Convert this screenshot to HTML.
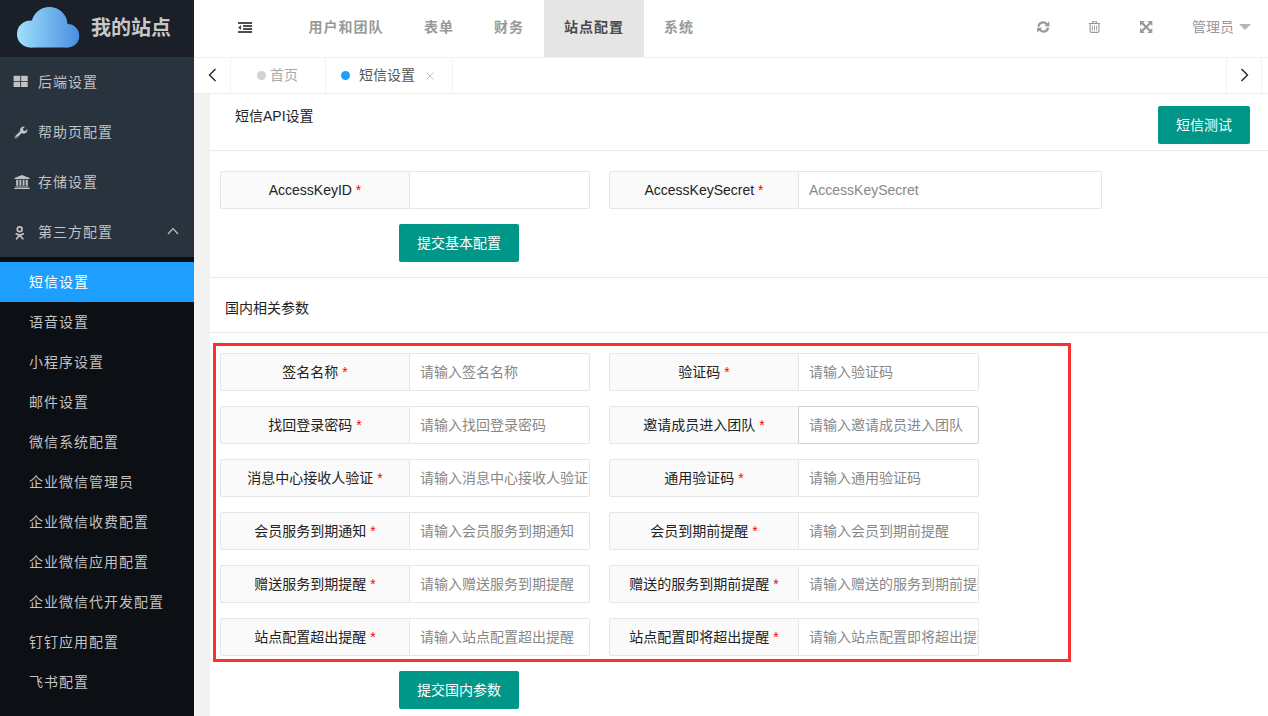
<!DOCTYPE html>
<html lang="zh-CN">
<head>
<meta charset="utf-8">
<title>短信设置</title>
<style>
*{box-sizing:border-box;margin:0;padding:0}
html,body{width:1268px;height:716px;overflow:hidden}
body{font-family:"Liberation Sans","Noto Sans CJK SC",sans-serif;font-size:14px;color:#333;background:#f2f2f2;position:relative}
.abs{position:absolute}
/* sidebar */
#side{position:absolute;left:0;top:0;width:194px;height:716px;background:#28333e}
#logo{position:absolute;left:0;top:0;width:194px;height:57px;background:#1a1f28}
#logo svg{position:absolute;left:16.9px;top:6.6px}
#logo .t{position:absolute;left:91px;top:13px;font-size:20px;font-weight:bold;color:#c8c8c8;line-height:30px;white-space:nowrap}
.mi{position:absolute;left:0;width:194px;height:50px;line-height:50px;color:#c2c2c2;font-size:14px;letter-spacing:1px;padding-left:38px;white-space:nowrap}
.mi svg{position:absolute;left:14px;top:18px}
#sub{position:absolute;left:0;top:257px;width:194px;height:459px;background:#0c0f13}
.si{position:absolute;left:0;width:194px;height:40px;line-height:40px;color:#c2c2c2;font-size:14px;letter-spacing:1px;padding-left:29px;white-space:nowrap}
.si.on{background:#1e9fff;color:#fff}
/* header */
#head{position:absolute;left:194px;top:0;width:1074px;height:57px;background:#fff}
.nv{position:absolute;top:0;height:57px;line-height:54px;font-size:14px;font-weight:bold;letter-spacing:1px;color:#999;white-space:nowrap;text-align:center}
.nv.on{background:#e5e5e5;color:#4a4a4a}
/* tabs */
#tabs{position:absolute;left:194px;top:57px;width:1074px;height:37px;background:#fff;border-top:1px solid #f0f0f0;border-bottom:1px solid #eee}
.vl{position:absolute;top:0;width:1px;height:35px;background:#f3f3f3}
.tb{position:absolute;top:0;height:35px;line-height:35px;font-size:14px;white-space:nowrap}
.dot{position:absolute;border-radius:50%}
/* card */
#card{position:absolute;left:210px;top:94px;width:1058px;height:622px;background:#fff}
.hr{position:absolute;left:210px;width:1058px;height:1px;background:#e8e8e8}
.lbl{position:absolute;height:38px;line-height:36px;text-align:center;background:#fafafa;border:1px solid #e6e6e6;border-radius:2px 0 0 2px;font-size:14px;color:#222;white-space:nowrap;overflow:hidden}
.lbl i{font-style:normal;color:#f00}
.inp{position:absolute;height:38px;line-height:36px;background:#fff;border:1px solid #e6e6e6;border-left:0;border-radius:0 2px 2px 0;font-size:14px;color:#888;padding-left:10px;white-space:nowrap;overflow:hidden}
.btn{position:absolute;height:38px;line-height:38px;background:#009688;color:#fff;font-size:14px;text-align:center;border-radius:2px;white-space:nowrap}
#red{position:absolute;left:213px;top:343px;width:858px;height:319px;border:3px solid #fb3030}
</style>
</head>
<body>

<div id="side">
  <div id="logo">
    <svg width="63" height="41" viewBox="0 0 63 41">
      <defs><linearGradient id="cg" gradientUnits="userSpaceOnUse" x1="0" y1="0" x2="62.3" y2="0"><stop offset="0" stop-color="#a0e0fb"/><stop offset="0.5" stop-color="#73b7ef"/><stop offset="1" stop-color="#4a8de0"/></linearGradient></defs>
      <g fill="url(#cg)"><circle cx="13.4" cy="27.05" r="13.45"/><circle cx="32.45" cy="18.05" r="18.1"/><circle cx="50.6" cy="28.8" r="11.7"/><rect x="13.4" y="25" width="37.2" height="15.5"/></g>
    </svg>
    <div class="t">我的站点</div>
  </div>

  <div class="mi" style="top:57px">
    <svg style="left:13px;top:18px" width="16" height="14" viewBox="0 0 16 14"><rect x="0.6" y="0.8" width="6.6" height="5.2" fill="#c2c2c2"/><rect x="8.1" y="0.8" width="6.6" height="5.2" fill="#c2c2c2"/><rect x="0.6" y="6.8" width="6.6" height="5.2" fill="#c2c2c2"/><rect x="8.1" y="6.8" width="6.6" height="5.2" fill="#c2c2c2"/></svg>
    后端设置</div>
  <div class="mi" style="top:107px">
    <svg style="left:14px;top:19px" width="14" height="13" viewBox="0 0 14 13"><path d="M1.9 11.1 L8.2 4.8" stroke="#c2c2c2" stroke-width="2.5" stroke-linecap="round" fill="none"/><path d="M13.3 2.9 L11.2 5 L9.3 4.6 L8.9 2.7 L11 0.6 C9.4 0.1 7.6 0.6 6.7 2 C5.7 3.4 5.9 5.4 7.1 6.6 C8.3 7.8 10.2 8 11.7 7.1 C13.1 6.2 13.7 4.5 13.3 2.9 Z" fill="#c2c2c2"/><circle cx="2" cy="11" r="0.7" fill="#28333e"/></svg>
    帮助页配置</div>
  <div class="mi" style="top:157px">
    <svg style="left:14px;top:18px" width="16" height="14" viewBox="0 0 16 14"><path d="M8 0 L15.6 3 V4 H0.4 V3 Z M2.2 4.8 H4.3 V10.8 H2.2 Z M5.5 4.8 H7.3 V10.8 H5.5 Z M8.7 4.8 H10.5 V10.8 H8.7 Z M11.7 4.8 H13.8 V10.8 H11.7 Z M1.2 11.4 H14.8 V12.6 H1.2 Z M0.2 12.9 H15.8 V14 H0.2 Z" fill="#c2c2c2"/></svg>
    存储设置</div>
  <div class="mi" style="top:207px">
    <svg style="left:15px;top:19px" width="10" height="14" viewBox="0 0 10 14"><circle cx="4.7" cy="3.3" r="2.4" fill="none" stroke="#c2c2c2" stroke-width="1.7"/><path d="M1.2 7.8 C3.4 9.3 6 9.3 8.2 7.8 M4.7 9 L1.6 12.8 M4.7 9 L7.8 12.8" fill="none" stroke="#c2c2c2" stroke-width="1.7" stroke-linecap="round"/></svg>
    第三方配置
    <svg style="left:167px;top:20px" width="12" height="8" viewBox="0 0 12 8"><path d="M1 7 L6 1.6 L11 7" fill="none" stroke="#c2c2c2" stroke-width="1.2"/></svg>
  </div>

  <div id="sub">
    <div class="si on" style="top:5px">短信设置</div>
    <div class="si" style="top:45px">语音设置</div>
    <div class="si" style="top:85px">小程序设置</div>
    <div class="si" style="top:125px">邮件设置</div>
    <div class="si" style="top:165px">微信系统配置</div>
    <div class="si" style="top:205px">企业微信管理员</div>
    <div class="si" style="top:245px">企业微信收费配置</div>
    <div class="si" style="top:285px">企业微信应用配置</div>
    <div class="si" style="top:325px">企业微信代开发配置</div>
    <div class="si" style="top:365px">钉钉应用配置</div>
    <div class="si" style="top:405px">飞书配置</div>
  </div>
</div>

<div id="head">
  <svg class="abs" style="left:44px;top:22px" width="15" height="11" viewBox="0 0 15 11"><path d="M0 0 H14.1 V1.9 H0 Z M5.1 3.05 H14.1 V4.9 H5.1 Z M5.1 6.1 H14.1 V7.95 H5.1 Z M0 9.1 H14.1 V11 H0 Z M3.1 3 V8 L0 5.5 Z" fill="#4d4d4d"/></svg>
  <div class="nv" style="left:95px;width:114px">用户和团队</div>
  <div class="nv" style="left:215px;width:60px">表单</div>
  <div class="nv" style="left:285px;width:60px">财务</div>
  <div class="nv on" style="left:350px;width:100px">站点配置</div>
  <div class="nv" style="left:455px;width:60px">系统</div>
  <svg class="abs" style="left:843px;top:21px" width="13" height="12" viewBox="0 0 13 12"><path d="M1.5 5.7 A4.6 4.6 0 0 1 9.8 3.3" fill="none" stroke="#999" stroke-width="2.2"/><path d="M12.4 0.2 V5.2 H7.4 Z" fill="#999"/><path d="M11.1 6.3 A4.6 4.6 0 0 1 2.8 8.7" fill="none" stroke="#999" stroke-width="2.2"/><path d="M0.2 11.8 V6.8 H5.2 Z" fill="#999"/></svg>
  <svg class="abs" style="left:894px;top:21px" width="13" height="12" viewBox="0 0 13 12"><path d="M0.8 2.5 H12.1 M4.4 2.3 V0.7 H8.6 V2.3 M2.1 2.8 V10.3 Q2.1 11.4 3.2 11.4 H9.8 Q10.9 11.4 10.9 10.3 V2.8" fill="none" stroke="#999" stroke-width="1.1"/><path d="M4.4 4.5 V9.5 M6.5 4.5 V9.5 M8.6 4.5 V9.5" fill="none" stroke="#999" stroke-width="0.9"/></svg>
  <svg class="abs" style="left:946px;top:21px" width="13" height="12" viewBox="0 0 13 12"><path d="M0 0 H5 L0 5 Z M12.3 0 V5 L7.3 0 Z M0 12 V7 L5 12 Z M12.3 12 H7.3 L12.3 7 Z" fill="#999"/><path d="M2 2 L10.3 10 M10.3 2 L2 10" stroke="#999" stroke-width="2.2" fill="none"/></svg>
  <div class="abs" style="left:998px;top:0;height:57px;line-height:54px;font-size:14px;color:#999;white-space:nowrap">管理员</div>
  <div class="abs" style="left:1045px;top:24px;width:0;height:0;border-left:6px solid transparent;border-right:6px solid transparent;border-top:6px solid #b5b5b5"></div>
</div>

<div id="tabs">
  <svg class="abs" style="left:14px;top:10px" width="9" height="14" viewBox="0 0 9 14"><path d="M7.5 1 L1.5 7 L7.5 13" fill="none" stroke="#222" stroke-width="1.4"/></svg>
  <div class="vl" style="left:36px"></div>
  <div class="dot" style="left:63px;top:13px;width:9px;height:9px;background:#d2d2d2"></div>
  <div class="tb" style="left:76px;color:#aaa">首页</div>
  <div class="vl" style="left:131px"></div>
  <div class="dot" style="left:147px;top:13px;width:9px;height:9px;background:#1e9fff"></div>
  <div class="tb" style="left:165px;color:#555">短信设置</div>
  <svg class="abs" style="left:232px;top:14.3px" width="8" height="8" viewBox="0 0 8 8"><path d="M0.5 0.5 L7.5 7.5 M7.5 0.5 L0.5 7.5" stroke="#c0c0c0" stroke-width="1" fill="none"/></svg>
  <div class="vl" style="left:258px"></div>
  <div class="vl" style="left:1032px"></div>
  <svg class="abs" style="left:1046px;top:10px" width="9" height="14" viewBox="0 0 9 14"><path d="M1.5 1 L7.5 7 L1.5 13" fill="none" stroke="#222" stroke-width="1.4"/></svg>
  <div class="vl" style="left:1067px"></div>
</div>

<div id="card"></div>

<div class="abs" style="left:235px;top:106px;line-height:20px;font-size:14px;color:#222;white-space:nowrap">短信API设置</div>
<div class="btn" style="left:1158px;top:106px;width:92px">短信测试</div>
<div class="hr" style="top:150px"></div>

<div class="lbl" style="left:220px;top:171px;width:190px">AccessKeyID <i>*</i></div>
<div class="inp" style="left:410px;top:171px;width:180px"></div>
<div class="lbl" style="left:609px;top:171px;width:190px">AccessKeySecret <i>*</i></div>
<div class="inp" style="left:799px;top:171px;width:303px">AccessKeySecret</div>
<div class="btn" style="left:399px;top:224px;width:120px">提交基本配置</div>
<div class="hr" style="top:277px"></div>

<div class="abs" style="left:225px;top:298px;line-height:20px;font-size:14px;color:#222;white-space:nowrap">国内相关参数</div>
<div class="hr" style="top:332px"></div>

<div id="red"></div>

<div class="lbl" style="left:220px;top:353px;width:190px">签名名称 <i>*</i></div>
<div class="inp" style="left:410px;top:353px;width:180px">请输入签名名称</div>
<div class="lbl" style="left:609px;top:353px;width:190px">验证码 <i>*</i></div>
<div class="inp" style="left:799px;top:353px;width:180px">请输入验证码</div>

<div class="lbl" style="left:220px;top:406px;width:190px">找回登录密码 <i>*</i></div>
<div class="inp" style="left:410px;top:406px;width:180px">请输入找回登录密码</div>
<div class="lbl" style="left:609px;top:406px;width:190px">邀请成员进入团队 <i>*</i></div>
<div class="inp" style="left:798px;top:406px;width:181px;border:1px solid #d2d2d2;padding-left:10px">请输入邀请成员进入团队</div>

<div class="lbl" style="left:220px;top:459px;width:190px">消息中心接收人验证 <i>*</i></div>
<div class="inp" style="left:410px;top:459px;width:180px">请输入消息中心接收人验证</div>
<div class="lbl" style="left:609px;top:459px;width:190px">通用验证码 <i>*</i></div>
<div class="inp" style="left:799px;top:459px;width:180px">请输入通用验证码</div>

<div class="lbl" style="left:220px;top:512px;width:190px">会员服务到期通知 <i>*</i></div>
<div class="inp" style="left:410px;top:512px;width:180px">请输入会员服务到期通知</div>
<div class="lbl" style="left:609px;top:512px;width:190px">会员到期前提醒 <i>*</i></div>
<div class="inp" style="left:799px;top:512px;width:180px">请输入会员到期前提醒</div>

<div class="lbl" style="left:220px;top:565px;width:190px">赠送服务到期提醒 <i>*</i></div>
<div class="inp" style="left:410px;top:565px;width:180px">请输入赠送服务到期提醒</div>
<div class="lbl" style="left:609px;top:565px;width:190px">赠送的服务到期前提醒 <i>*</i></div>
<div class="inp" style="left:799px;top:565px;width:180px">请输入赠送的服务到期前提醒</div>

<div class="lbl" style="left:220px;top:618px;width:190px">站点配置超出提醒 <i>*</i></div>
<div class="inp" style="left:410px;top:618px;width:180px">请输入站点配置超出提醒</div>
<div class="lbl" style="left:609px;top:618px;width:190px">站点配置即将超出提醒 <i>*</i></div>
<div class="inp" style="left:799px;top:618px;width:180px">请输入站点配置即将超出提醒</div>

<div class="btn" style="left:399px;top:671px;width:120px">提交国内参数</div>

</body>
</html>
